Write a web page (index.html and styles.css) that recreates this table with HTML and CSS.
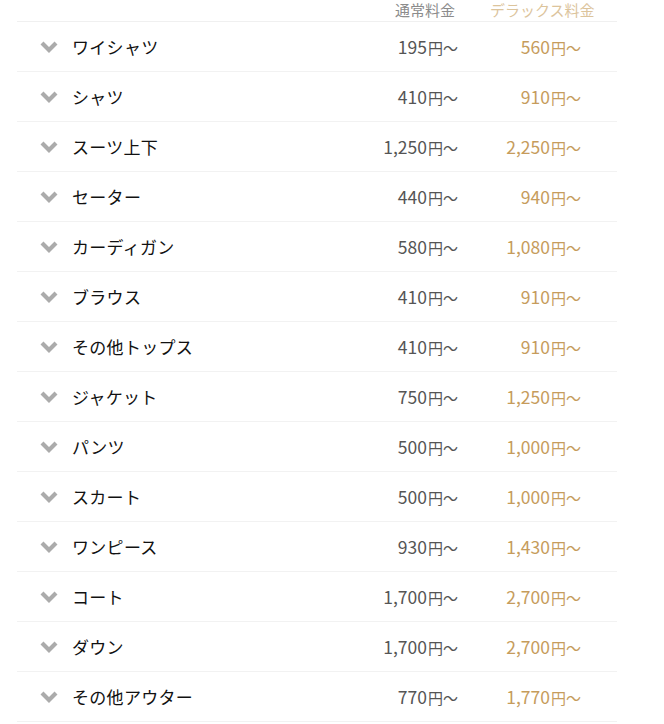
FILE: index.html
```html
<!DOCTYPE html>
<html lang="ja">
<head>
<meta charset="utf-8">
<link rel="stylesheet" href="styles.css">
</head>
<body>
<div class="table">
  <div class="head">
    <span class="h-reg">通常料金</span>
    <span class="h-dx">デラックス料金</span>
  </div>
  <div class="row"><svg class="chev" viewBox="0 0 18 12"><polyline points="2,2 9,9 16,2"/></svg><span class="name">ワイシャツ</span><span class="reg">195<small>円〜</small></span><span class="dx">560<small>円〜</small></span></div>
  <div class="row"><svg class="chev" viewBox="0 0 18 12"><polyline points="2,2 9,9 16,2"/></svg><span class="name">シャツ</span><span class="reg">410<small>円〜</small></span><span class="dx">910<small>円〜</small></span></div>
  <div class="row"><svg class="chev" viewBox="0 0 18 12"><polyline points="2,2 9,9 16,2"/></svg><span class="name">スーツ上下</span><span class="reg">1,250<small>円〜</small></span><span class="dx">2,250<small>円〜</small></span></div>
  <div class="row"><svg class="chev" viewBox="0 0 18 12"><polyline points="2,2 9,9 16,2"/></svg><span class="name">セーター</span><span class="reg">440<small>円〜</small></span><span class="dx">940<small>円〜</small></span></div>
  <div class="row"><svg class="chev" viewBox="0 0 18 12"><polyline points="2,2 9,9 16,2"/></svg><span class="name">カーディガン</span><span class="reg">580<small>円〜</small></span><span class="dx">1,080<small>円〜</small></span></div>
  <div class="row"><svg class="chev" viewBox="0 0 18 12"><polyline points="2,2 9,9 16,2"/></svg><span class="name">ブラウス</span><span class="reg">410<small>円〜</small></span><span class="dx">910<small>円〜</small></span></div>
  <div class="row"><svg class="chev" viewBox="0 0 18 12"><polyline points="2,2 9,9 16,2"/></svg><span class="name">その他トップス</span><span class="reg">410<small>円〜</small></span><span class="dx">910<small>円〜</small></span></div>
  <div class="row"><svg class="chev" viewBox="0 0 18 12"><polyline points="2,2 9,9 16,2"/></svg><span class="name">ジャケット</span><span class="reg">750<small>円〜</small></span><span class="dx">1,250<small>円〜</small></span></div>
  <div class="row"><svg class="chev" viewBox="0 0 18 12"><polyline points="2,2 9,9 16,2"/></svg><span class="name">パンツ</span><span class="reg">500<small>円〜</small></span><span class="dx">1,000<small>円〜</small></span></div>
  <div class="row"><svg class="chev" viewBox="0 0 18 12"><polyline points="2,2 9,9 16,2"/></svg><span class="name">スカート</span><span class="reg">500<small>円〜</small></span><span class="dx">1,000<small>円〜</small></span></div>
  <div class="row"><svg class="chev" viewBox="0 0 18 12"><polyline points="2,2 9,9 16,2"/></svg><span class="name">ワンピース</span><span class="reg">930<small>円〜</small></span><span class="dx">1,430<small>円〜</small></span></div>
  <div class="row"><svg class="chev" viewBox="0 0 18 12"><polyline points="2,2 9,9 16,2"/></svg><span class="name">コート</span><span class="reg">1,700<small>円〜</small></span><span class="dx">2,700<small>円〜</small></span></div>
  <div class="row"><svg class="chev" viewBox="0 0 18 12"><polyline points="2,2 9,9 16,2"/></svg><span class="name">ダウン</span><span class="reg">1,700<small>円〜</small></span><span class="dx">2,700<small>円〜</small></span></div>
  <div class="row"><svg class="chev" viewBox="0 0 18 12"><polyline points="2,2 9,9 16,2"/></svg><span class="name">その他アウター</span><span class="reg">770<small>円〜</small></span><span class="dx">1,770<small>円〜</small></span></div>
</div>
</body>
</html>
```
FILE: styles.css
```css
html, body {
  margin: 0;
  padding: 0;
  background: #fff;
}
body {
  font-family: "Noto Sans CJK JP", "Noto Sans", sans-serif;
}
.table {
  width: 600px;
  margin-left: 17px;
}
.head {
  height: 21px;
  border-bottom: 1px solid #f0f0f0;
  display: flex;
  font-size: 15px;
  line-height: 21px;
}
.h-reg {
  margin-left: 378px;
  color: #8c8c8c;
  position: relative;
  top: -1px;
}
.h-dx {
  margin-left: 35px;
  color: #dcc49c;
  position: relative;
  top: -1px;
}
.row {
  height: 49px;
  border-bottom: 1px solid #f2f2f2;
  display: flex;
  align-items: center;
}
.chev {
  width: 18px;
  height: 12px;
  margin-left: 23px;
  margin-top: 1px;
  fill: none;
  stroke: #ababab;
  stroke-width: 4.2;
  stroke-linecap: butt;
  stroke-linejoin: miter;
}
.name {
  margin-left: 14px;
  font-size: 17px;
  color: #111;
  flex: 1;
  letter-spacing: 0.3px;
}
.reg, .dx {
  font-size: 17.5px;
  text-align: right;
  white-space: nowrap;
}
.reg {
  width: 120px;
  color: #555;
}
.dx {
  width: 123px;
  margin-right: 36px;
  color: #c69c5c;
}
small {
  font-size: 15px;
  margin-left: 1px;
}
```
